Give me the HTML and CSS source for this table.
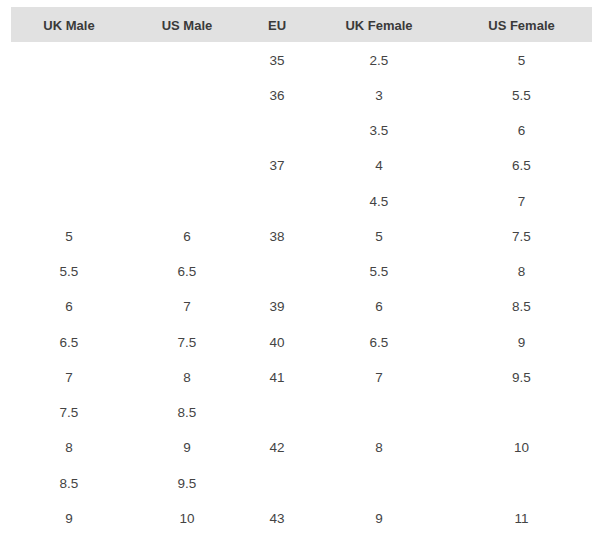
FILE: index.html
```html
<!DOCTYPE html>
<html>
<head>
<meta charset="utf-8">
<link rel="stylesheet" href="styles.css">
</head>
<body>
<div class="size-table">
  <div class="row head">
    <div>UK Male</div><div>US Male</div><div>EU</div><div>UK Female</div><div>US Female</div>
  </div>
  <div class="row"><div></div><div></div><div>35</div><div>2.5</div><div>5</div></div>
  <div class="row"><div></div><div></div><div>36</div><div>3</div><div>5.5</div></div>
  <div class="row"><div></div><div></div><div></div><div>3.5</div><div>6</div></div>
  <div class="row"><div></div><div></div><div>37</div><div>4</div><div>6.5</div></div>
  <div class="row"><div></div><div></div><div></div><div>4.5</div><div>7</div></div>
  <div class="row"><div>5</div><div>6</div><div>38</div><div>5</div><div>7.5</div></div>
  <div class="row"><div>5.5</div><div>6.5</div><div></div><div>5.5</div><div>8</div></div>
  <div class="row"><div>6</div><div>7</div><div>39</div><div>6</div><div>8.5</div></div>
  <div class="row"><div>6.5</div><div>7.5</div><div>40</div><div>6.5</div><div>9</div></div>
  <div class="row"><div>7</div><div>8</div><div>41</div><div>7</div><div>9.5</div></div>
  <div class="row"><div>7.5</div><div>8.5</div><div></div><div></div><div></div></div>
  <div class="row"><div>8</div><div>9</div><div>42</div><div>8</div><div>10</div></div>
  <div class="row"><div>8.5</div><div>9.5</div><div></div><div></div><div></div></div>
  <div class="row"><div>9</div><div>10</div><div>43</div><div>9</div><div>11</div></div>
</div>
</body>
</html>
```
FILE: styles.css
```css
html, body {
  margin: 0;
  padding: 0;
  background: #fff;
}
body {
  padding: 7px 8px 0 11px;
  font-family: "Liberation Sans", Arial, sans-serif;
  color: #444;
}
.size-table {
  width: 581px;
}
.row {
  display: grid;
  grid-template-columns: 116px 120px 60px 144px 141px;
  height: 35.25px;
  align-items: center;
  font-size: 13.5px;
  padding-top: 1px;
  box-sizing: border-box;
}
.row > div {
  text-align: center;
}
.head {
  background: #e1e1e1;
  height: 35px;
  font-weight: bold;
  font-size: 13px;
  color: #3a3a3a;
}
```
